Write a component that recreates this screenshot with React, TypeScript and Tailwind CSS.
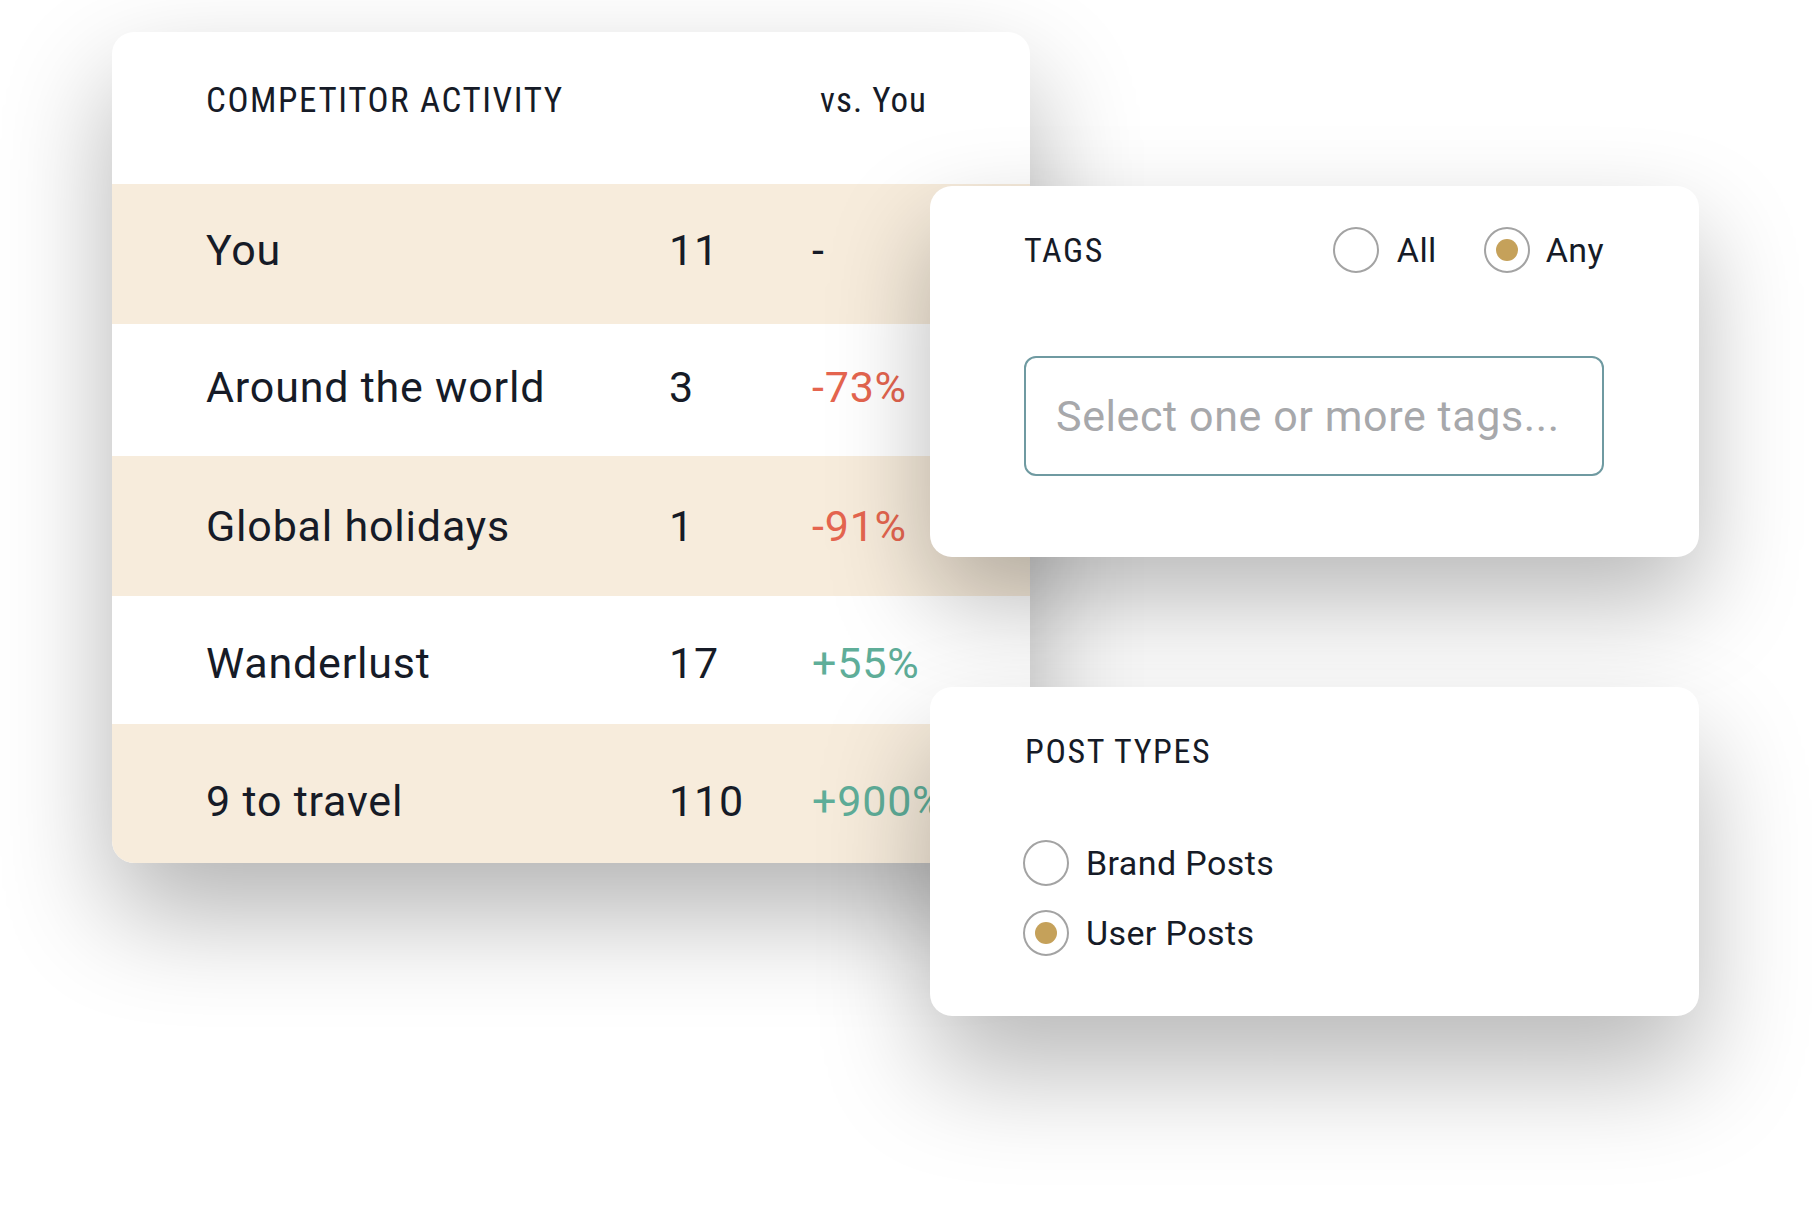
const rows = [
  { name: "You", count: "11", diff: "-", tone: "text-[#161b27]", bg: "bg-[#f7ecdc]", box: "h-[140px] pb-[8px]" },
  { name: "Around the world", count: "3", diff: "-73%", tone: "text-[#e5654f]", bg: "bg-white", box: "h-[132px] pb-[5px]" },
  { name: "Global holidays", count: "1", diff: "-91%", tone: "text-[#e5654f]", bg: "bg-[#f7ecdc]", box: "h-[140px]" },
  { name: "Wanderlust", count: "17", diff: "+55%", tone: "text-[#5fae99]", bg: "bg-white", box: "h-[128px] pt-[6px]" },
  { name: "9 to travel", count: "110", diff: "+900%", tone: "text-[#5fae99]", bg: "bg-[#f7ecdc]", box: "h-[139px] pt-[15px]" },
]

function Radio({ checked }: { checked?: boolean }) {
  return (
    <span className="w-[46px] h-[46px] rounded-full border-2 border-[#a3a3a3] bg-white flex items-center justify-center shrink-0">
      {checked && <span className="w-[22px] h-[22px] rounded-full bg-[#c5a15a]" />}
    </span>
  )
}

// caps labels use the condensed cut with some tracking
const label = "font-['Roboto_Condensed',sans-serif] text-[34px] leading-none tracking-[1.6px]"
const body = "text-[34px] leading-none tracking-[0.4px]"

export default function App() {
  return (
    <div className="w-[1812px] h-[1210px] bg-white overflow-hidden grid grid-cols-[112px_818px_100px_669px_1fr] grid-rows-[32px_154px_371px_130px_176px_153px_1fr] font-['Roboto',sans-serif] text-[#161b27]">
      {/* competitor table */}
      <div className="col-start-2 col-end-4 row-start-2 row-end-6 bg-white rounded-[22px] overflow-hidden shadow-[0_50px_110px_rgba(0,0,0,0.3)] flex flex-col">
        <div className="h-[152px] shrink-0 pl-[94px] pb-[16px] grid grid-cols-[614px_auto] items-center font-['Roboto_Condensed',sans-serif] text-[35px] leading-none">
          <span className="tracking-[1.6px]">COMPETITOR ACTIVITY</span>
          <span className="tracking-[1px]">vs. You</span>
        </div>
        {rows.map((r) => (
          <div key={r.name} className={`${r.bg} ${r.box} shrink-0 pl-[94px] grid grid-cols-[463px_143px_1fr] items-center text-[43px] leading-none tracking-[0.8px] whitespace-nowrap`}>
            <span>{r.name}</span>
            <span>{r.count}</span>
            <span className={r.tone}>{r.diff}</span>
          </div>
        ))}
      </div>

      {/* tags */}
      <div className="col-start-3 col-end-5 row-start-3 row-end-4 bg-white rounded-[22px] shadow-[0_45px_100px_rgba(0,0,0,0.28)] pl-[94px] pr-[95px] pt-[41px] flex flex-col">
        <div className="flex items-center justify-between h-[46px]">
          <span className={label}>TAGS</span>
          <div className="flex items-center">
            <Radio />
            <span className={`ml-[18px] ${body}`}>All</span>
            <span className="ml-[47px]"><Radio checked /></span>
            <span className={`ml-[16px] ${body}`}>Any</span>
          </div>
        </div>
        <div className="mt-[83px] h-[120px] border-2 border-[#6f9aa1] rounded-[12px] flex items-center pl-[30px] text-[43px] leading-none tracking-[0.6px] text-[#a7a8ab] whitespace-nowrap">
          Select one or more tags...
        </div>
      </div>

      {/* post types */}
      <div className="col-start-3 col-end-5 row-start-5 row-end-7 bg-white rounded-[22px] shadow-[0_55px_110px_rgba(0,0,0,0.28)] pl-[93px] pt-[47px] flex flex-col">
        <span className={`ml-[2px] ${label}`}>POST TYPES</span>
        <div className="mt-[72px] flex items-center gap-[17px]">
          <Radio />
          <span className={body}>Brand Posts</span>
        </div>
        <div className="mt-[24px] flex items-center gap-[17px]">
          <Radio checked />
          <span className={body}>User Posts</span>
        </div>
      </div>
    </div>
  )
}
